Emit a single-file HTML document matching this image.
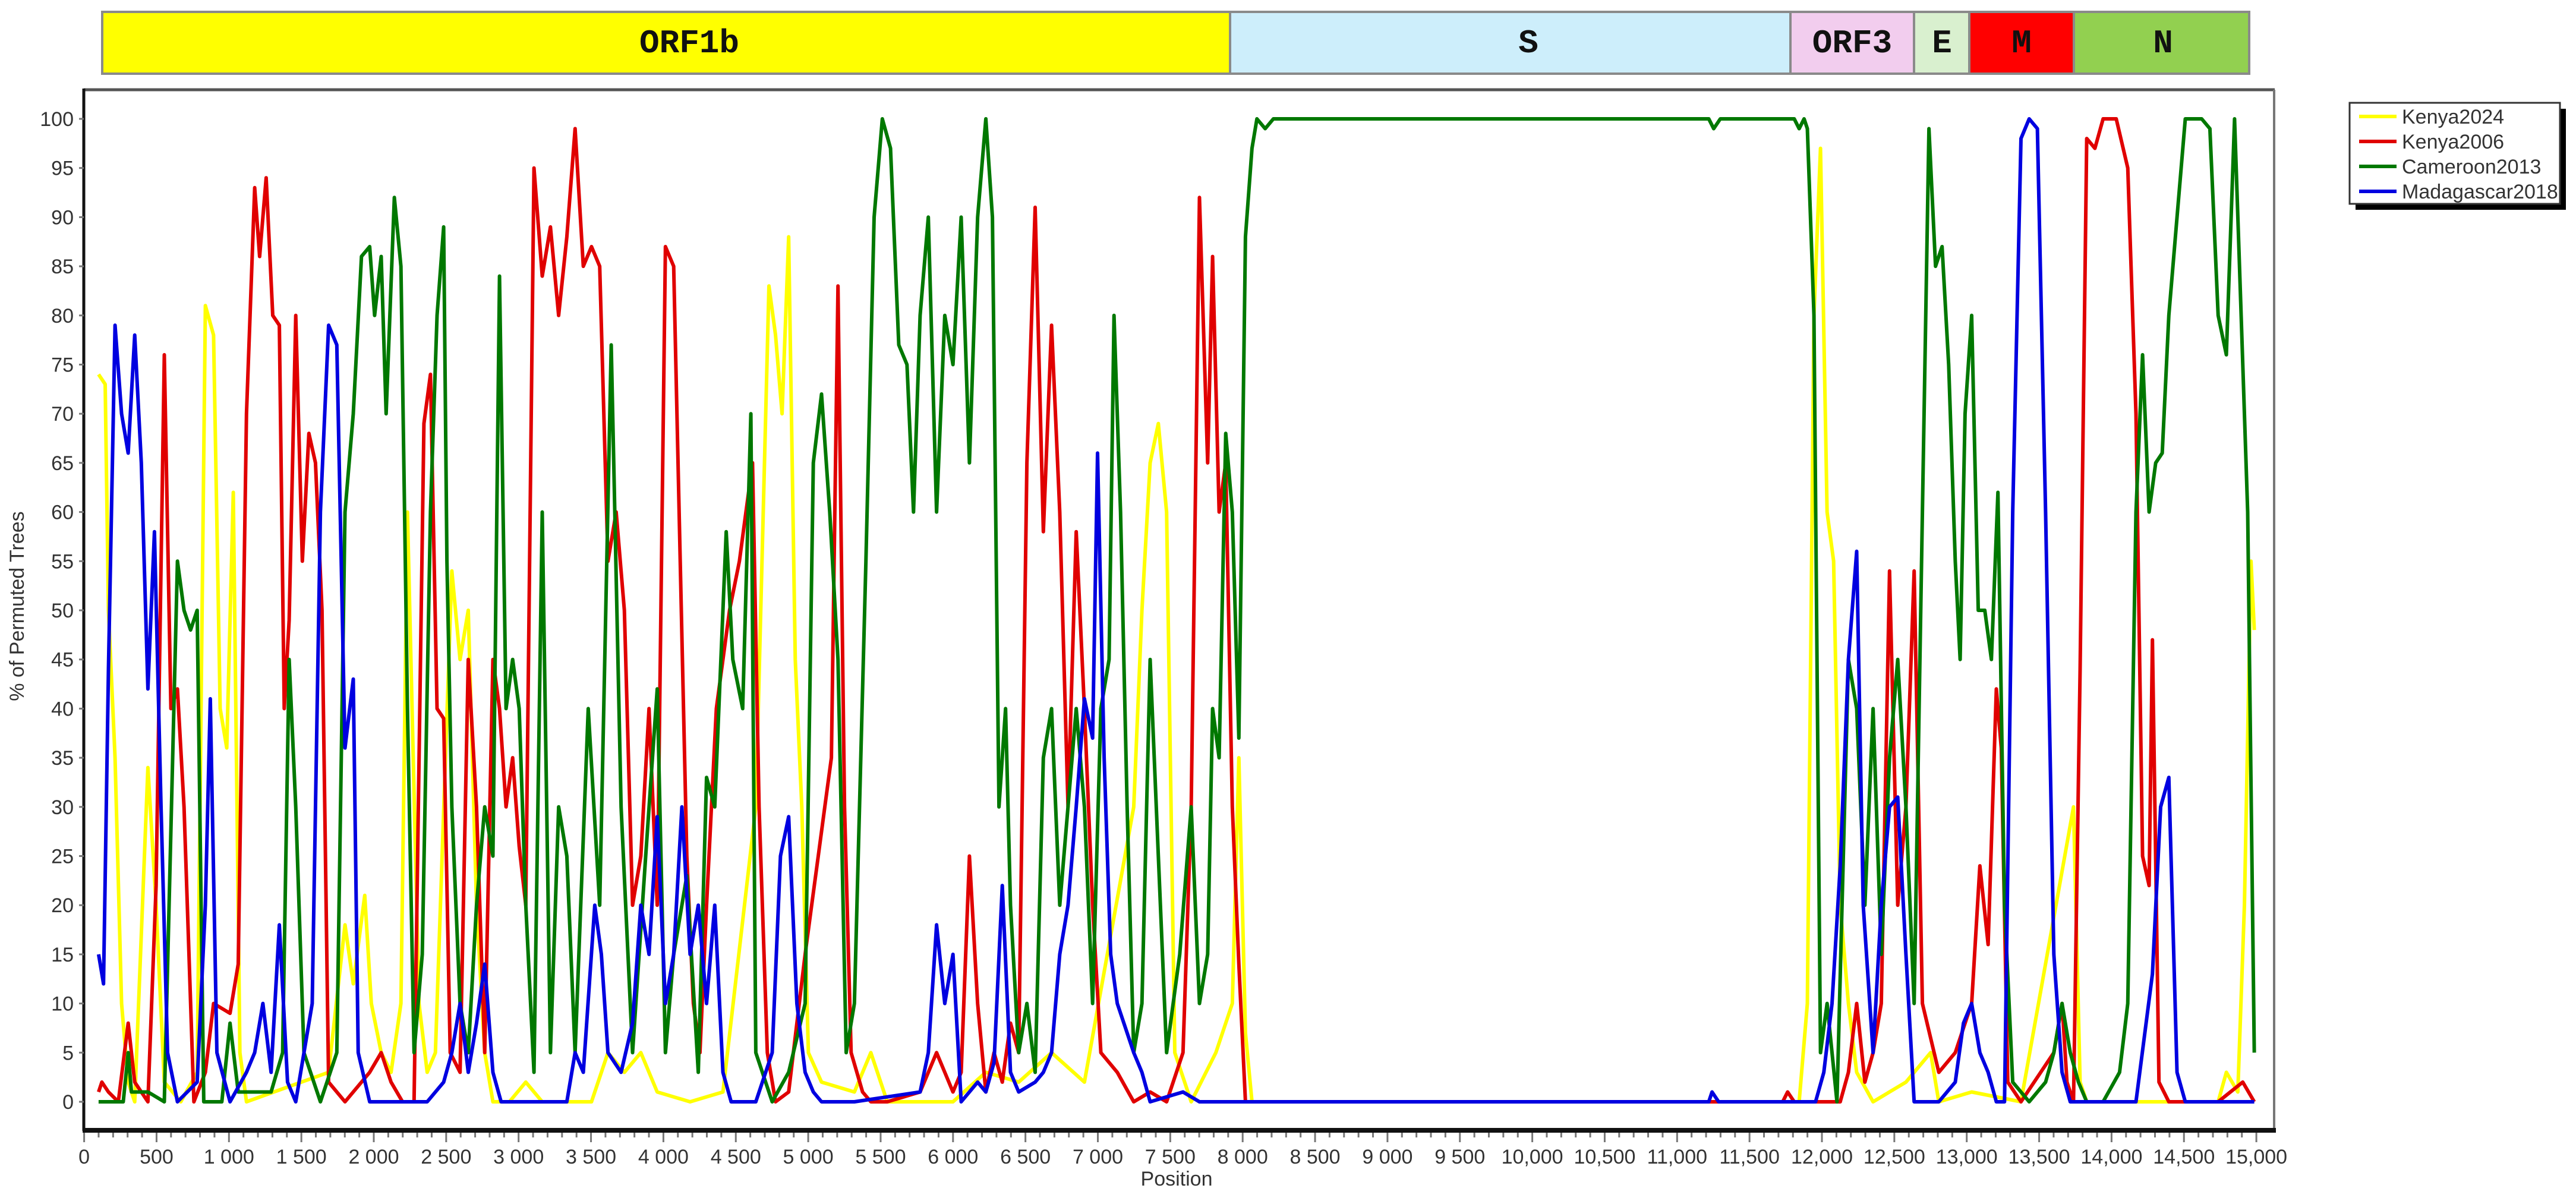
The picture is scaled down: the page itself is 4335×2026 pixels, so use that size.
<!DOCTYPE html>
<html><head><meta charset="utf-8"><style>
html,body{margin:0;padding:0;background:#fff;}
svg{display:block;}
text{font-family:"Liberation Sans",sans-serif;}
.g text{font-family:"Liberation Mono","DejaVu Sans Mono",monospace;font-weight:bold;font-size:56px;fill:#111;}
</style></head><body>
<svg id="s" width="4335" height="2026" viewBox="0 0 4335 2026" xmlns="http://www.w3.org/2000/svg">
<rect width="4335" height="2026" fill="#fff"/>
<g stroke="#8a8a8a" stroke-width="4">
<rect x="172" y="20" width="1898" height="104" fill="#ffff00"/>
<rect x="2070" y="20" width="943" height="104" fill="#cdeefb"/>
<rect x="3013" y="20" width="208" height="104" fill="#f2cdee"/>
<rect x="3221" y="20" width="93" height="104" fill="#d9f0cf"/>
<rect x="3314" y="20" width="176" height="104" fill="#ff0000"/>
<rect x="3490" y="20" width="295" height="104" fill="#92d050"/>
</g>
<g class="g" text-anchor="middle">
<text x="1160" y="88">ORF1b</text>
<text x="2572" y="88">S</text>
<text x="3117" y="88">ORF3</text>
<text x="3268" y="88">E</text>
<text x="3402" y="88">M</text>
<text x="3640" y="88">N</text>
</g>
<line x1="141" y1="151" x2="3828" y2="151" stroke="#555" stroke-width="5"/>
<line x1="3827" y1="151" x2="3827" y2="1900" stroke="#777" stroke-width="4"/>
<line x1="141" y1="149" x2="141" y2="1903" stroke="#111" stroke-width="5"/>
<line x1="139" y1="1902" x2="3830" y2="1902" stroke="#111" stroke-width="8"/>
<g id="ticks" stroke="#777" stroke-width="3"></g>
<g id="ylab" font-size="34" fill="#333" text-anchor="end"></g>
<g id="xlab" font-size="34" fill="#333" text-anchor="middle"></g>
<text x="40" y="1020" font-size="34" fill="#333" text-anchor="middle" transform="rotate(-90 40 1020)">% of Permuted Trees</text>
<text x="1980" y="1995" font-size="34" fill="#333" text-anchor="middle">Position</text>
<g id="lines" fill="none" stroke-width="6" stroke-linejoin="round"></g>
<rect x="3964" y="183" width="354" height="170" fill="#000"/>
<rect x="3954" y="173" width="354" height="170" fill="#fff" stroke="#333" stroke-width="3"/>
<g stroke-width="6">
<line x1="3970" y1="196" x2="4033" y2="196" stroke="#ffff00"/>
<line x1="3970" y1="238" x2="4033" y2="238" stroke="#e00000"/>
<line x1="3970" y1="280" x2="4033" y2="280" stroke="#007800"/>
<line x1="3970" y1="322" x2="4033" y2="322" stroke="#0000e0"/>
</g>
<g font-size="34" fill="#333">
<text x="4042" y="208">Kenya2024</text>
<text x="4042" y="250">Kenya2006</text>
<text x="4042" y="292">Cameroon2013</text>
<text x="4042" y="334">Madagascar2018</text>
</g>
</svg>
<script>
var NS="http://www.w3.org/2000/svg";
function el(t,a,p,txt){var e=document.createElementNS(NS,t);for(var k in a)e.setAttribute(k,a[k]);if(txt!=null)e.textContent=txt;document.getElementById(p).appendChild(e);}
function Y(v){return 1854-v*16.54;}
function X(p){return 141.6+p*0.2437;}
for(var v=0;v<=100;v+=5){el("line",{x1:133,y1:Y(v),x2:141,y2:Y(v)},"ticks");el("text",{x:124,y:Y(v)+12},"ylab",String(v));}
for(var p=0;p<=15000;p+=100){var big=p%500==0;el("line",{x1:X(p),y1:1906,x2:X(p),y2:big?1922:1914},"ticks");
 if(big){var s;if(p<10000){s=p>=1000?Math.floor(p/1000)+" "+("00"+(p%1000)).slice(-3):String(p);}else{s=Math.floor(p/1000)+","+("00"+(p%1000)).slice(-3);}
 el("text",{x:X(p),y:1958},"xlab",s);}}
var D={
"#ffff00":[60,74,64,73,66,50,70,35,74,10,78,2,82,0,90,34,95,20,100,2,110,0,120,3,125,81,130,78,134,40,138,36,142,62,146,5,150,0,200,3,210,18,215,12,222,21,226,10,232,5,238,3,244,10,248,60,255,10,260,3,265,5,275,54,280,45,285,50,290,20,295,5,300,0,310,0,320,2,330,0,360,0,370,5,380,3,390,5,400,1,420,0,440,1,460,30,468,83,472,78,476,70,480,88,484,45,488,30,492,5,500,2,520,1,530,5,540,0,580,0,600,3,620,2,640,5,660,2,690,30,695,50,700,65,705,69,710,60,715,5,725,0,740,5,750,10,754,35,758,7,762,0,1095,0,1100,10,1104,80,1108,97,1112,60,1116,55,1120,20,1125,10,1130,3,1140,0,1160,2,1175,5,1180,0,1200,1,1230,0,1262,30,1266,2,1270,0,1350,0,1355,3,1362,1,1366,20,1370,55,1372,48],
"#e00000":[60,1,62,2,66,1,72,0,78,8,82,2,90,0,95,22,100,76,104,40,108,42,112,30,118,0,125,3,130,10,140,9,145,14,150,70,155,93,158,86,162,94,166,80,170,79,173,40,176,49,180,80,184,55,188,68,192,65,196,50,200,2,210,0,225,3,232,5,238,2,245,0,252,0,258,69,262,74,266,40,270,39,274,5,280,3,285,45,290,30,295,5,300,45,304,40,308,30,312,35,316,26,320,20,325,95,330,84,335,89,340,80,345,88,350,99,355,85,360,87,365,85,370,55,375,60,380,50,385,20,390,25,395,40,400,20,405,87,410,85,414,55,418,25,422,10,426,5,430,20,436,40,440,45,444,50,450,55,454,60,458,65,462,30,467,5,472,0,480,1,490,15,494,20,498,25,502,30,506,35,510,83,514,30,518,5,525,1,530,0,540,0,560,1,570,5,575,3,580,1,585,3,590,25,595,10,600,1,605,5,610,2,615,8,620,5,625,65,630,91,635,58,640,79,645,60,650,30,655,58,660,40,665,20,670,5,680,3,690,0,700,1,710,0,720,5,725,30,730,92,735,65,738,86,742,60,746,65,750,30,754,14,758,0,1085,0,1088,1,1092,0,1120,0,1125,3,1130,10,1135,2,1140,5,1145,10,1150,54,1155,20,1160,30,1165,54,1170,10,1180,3,1190,5,1200,10,1205,24,1210,16,1215,42,1218,36,1222,2,1230,0,1250,5,1255,10,1258,2,1262,0,1266,44,1270,98,1275,97,1280,100,1288,100,1295,95,1300,70,1304,25,1308,22,1310,47,1314,2,1320,0,1350,0,1365,2,1372,0],
"#007800":[60,0,75,0,78,5,80,1,90,1,100,0,108,55,112,50,116,48,120,50,124,0,135,0,140,8,145,1,155,1,165,1,172,5,176,45,180,30,185,5,195,0,205,5,210,60,215,70,220,86,225,87,228,80,232,86,235,70,240,92,244,85,248,40,252,5,257,15,262,60,266,80,270,89,272,55,275,30,280,10,285,5,290,20,295,30,300,25,304,84,308,40,312,45,316,40,320,20,325,3,330,60,335,5,340,30,345,25,350,5,358,40,365,20,372,77,378,30,385,5,393,25,400,42,405,5,410,15,418,23,425,3,430,33,435,30,442,58,446,45,452,40,457,70,460,5,470,0,480,3,490,10,495,65,500,72,505,60,510,45,515,5,520,10,527,55,532,90,537,100,542,97,547,77,552,75,556,60,560,80,565,90,570,60,575,80,580,75,585,90,590,65,595,90,600,100,604,90,608,30,612,40,615,20,620,5,625,10,630,3,635,35,640,40,645,20,650,30,655,40,660,30,665,10,670,40,675,45,678,80,682,60,686,30,690,5,695,10,700,45,705,25,710,5,718,15,725,30,730,10,735,15,738,40,742,35,746,68,750,60,754,37,758,88,762,97,765,100,770,99,775,100,800,100,1040,100,1043,99,1047,100,1050,100,1092,100,1095,99,1098,100,1100,99,1104,80,1108,5,1112,10,1118,0,1125,45,1130,40,1135,20,1140,40,1145,15,1150,35,1155,45,1160,30,1165,10,1170,60,1174,99,1178,85,1182,87,1186,75,1190,55,1193,45,1196,70,1200,80,1204,50,1208,50,1212,45,1216,62,1220,20,1225,2,1235,0,1245,2,1250,5,1255,10,1260,5,1265,2,1270,0,1280,0,1290,3,1295,10,1300,60,1304,76,1308,60,1312,65,1316,66,1320,80,1325,90,1330,100,1340,100,1345,99,1350,80,1355,76,1360,100,1364,80,1368,60,1372,5],
"#0000e0":[60,15,63,12,66,44,70,79,74,70,78,66,82,78,86,65,90,42,94,58,98,30,102,5,108,0,120,2,125,20,128,41,132,5,140,0,150,3,155,5,160,10,165,3,170,18,175,2,180,0,190,10,195,60,200,79,205,77,210,36,215,43,218,5,225,0,260,0,270,2,275,5,280,10,285,3,290,8,295,14,300,3,305,0,345,0,350,5,355,3,362,20,366,15,370,5,378,3,385,8,390,20,395,15,400,29,405,10,410,15,415,30,420,15,425,20,430,10,435,20,440,3,445,0,460,0,470,5,475,25,480,29,485,10,490,3,495,1,500,0,520,0,560,1,565,5,570,18,575,10,580,15,585,0,595,2,600,1,605,4,610,22,615,3,620,1,630,2,635,3,640,5,645,15,650,20,655,30,660,41,665,37,668,66,672,35,676,15,680,10,690,5,695,3,700,0,720,1,730,0,1040,0,1042,1,1046,0,1105,0,1110,3,1115,10,1120,24,1125,45,1130,56,1134,20,1140,5,1145,20,1150,30,1155,31,1160,15,1165,0,1180,0,1190,2,1195,8,1200,10,1205,5,1210,3,1215,0,1220,0,1225,60,1230,98,1235,100,1240,99,1245,60,1250,15,1255,3,1260,0,1300,0,1310,13,1315,30,1320,33,1325,3,1330,0,1372,0]};
for(var c in D){var a=D[c],pts=[];for(var i=0;i<a.length;i+=2){pts.push((a[i]*2.765).toFixed(1)+","+Y(a[i+1]).toFixed(1));}
el("polyline",{points:pts.join(" "),stroke:c},"lines");}
</script>
</body></html>
